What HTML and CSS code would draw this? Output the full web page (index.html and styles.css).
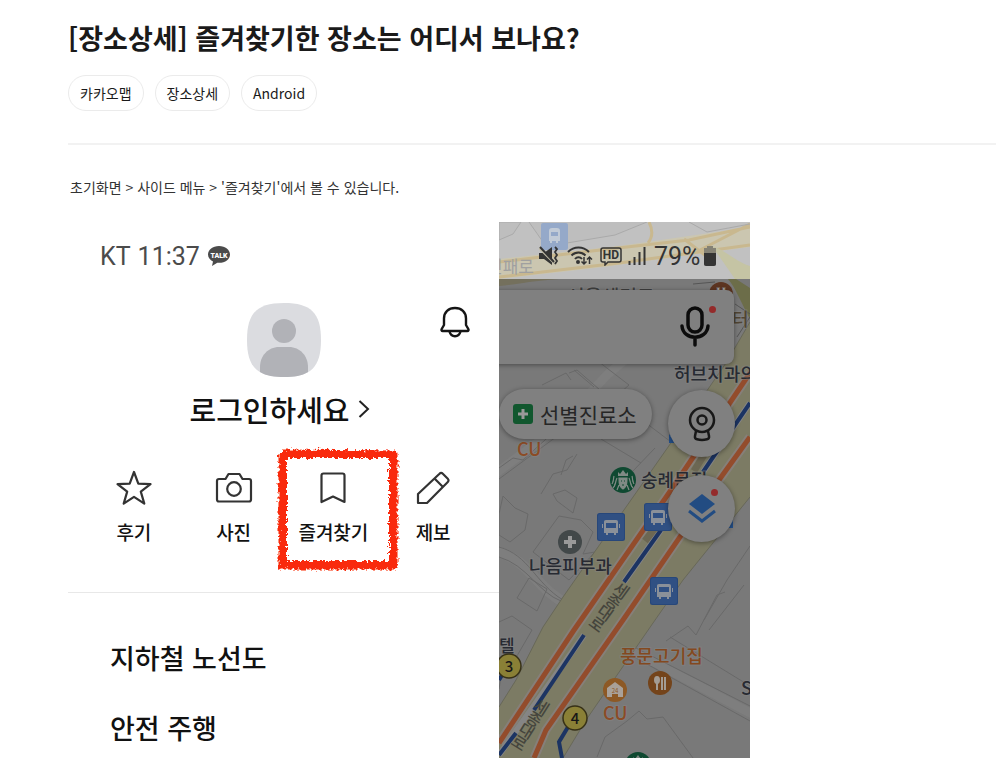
FILE: index.html
```html
<!DOCTYPE html>
<html lang="ko">

<head>
    <meta charset="UTF-8">
    <meta name="viewport" content="width=device-width, initial-scale=1.0">
    <title>[장소상세] 즐겨찾기한 장소는 어디서 보나요?</title>
    <link rel="stylesheet" href="styles.css">
</head>

<body>

    <main class="article">
        <header class="article-head">
            <h1>[장소상세] 즐겨찾기한 장소는 어디서 보나요?</h1>
            <div class="tags">
                <a href="#" class="tag">카카오맵</a>
                <a href="#" class="tag">장소상세</a>
                <a href="#" class="tag">Android</a>
            </div>
        </header>

        <p class="path">초기화면 &gt; 사이드 메뉴 &gt; '즐겨찾기'에서 볼 수 있습니다.</p>

        <div class="phone">
            <section class="drawer">
                <div class="status">
                    <span class="carrier">KT</span>
                    <span class="clock">11:37</span>
                    <svg class="talk" viewBox="0 0 24 22">
                        <path d="M12 1C5.600 1 1 4.800 1 9.500c0 3 2 5.600 5 7.100L5 21l5.300-3.300c7 .8 12.700-3 12.700-8.200C23 4.800 18.400 1 12 1z" fill="#4b4b4b"/>
                        <text x="12" y="12.500" text-anchor="middle" font-size="7" font-weight="900" fill="#fff">TALK</text>
                    </svg>
                </div>

                <div class="profile">
                    <svg class="avatar" viewBox="0 0 74 74">
                        <path d="M37 0C64 0 74 10 74 37S64 74 37 74 0 64 0 37 10 0 37 0z" fill="#dbdce0"/>
                        <circle cx="37" cy="28" r="12" fill="#b1b2b7"/>
                        <path d="M13 69V64c0-11 8-20 19-20h10c11 0 19 9 19 20v5c-6 4-14 5-24 5s-18-1-24-5z" fill="#b1b2b7"/>
                    </svg>
                    <button class="bell" aria-label="알림">
                        <svg viewBox="0 0 30 32" fill="none" stroke="#151515" stroke-width="2.400" stroke-linejoin="round">
                            <path d="M4 19V12.500C4 6 8.500 2 15 2s11 4 11 10.500V19l2.300 4c.5 1 .1 2-1 2H2.700c-1.100 0-1.500-1-1-2z"/>
                            <path d="M9.500 25.500c.8 3 2.800 4.700 5.500 4.700s4.700-1.700 5.500-4.700"/>
                        </svg>
                    </button>
                </div>

                <button class="login">
                    로그인하세요
                    <svg viewBox="0 0 12 18" fill="none" stroke="#222" stroke-width="2"><path d="M1.500 1l8.500 8-8.500 8"/></svg>
                </button>

                <nav class="quick">
                    <button>
                        <svg viewBox="0 0 38 38" fill="none" stroke="#333" stroke-width="2.200" stroke-linejoin="round">
                            <path d="M19 3l4.300 11.700 12.200.4-9.700 7.500 3.500 12L19 27.800 8.700 34.600l3.500-12L2.500 15.100l12.200-.4z"/>
                        </svg>
                        <span>후기</span>
                    </button>
                    <button>
                        <svg viewBox="0 0 38 38" fill="none" stroke="#333" stroke-width="2.200" stroke-linejoin="round">
                            <path d="M4 10h6.500l3-5h11l3 5H34c1.200 0 2 .8 2 2v18.500c0 1.200-.8 2-2 2H4c-1.200 0-2-.8-2-2V12c0-1.200.8-2 2-2z"/>
                            <circle cx="19" cy="20" r="6.800"/>
                        </svg>
                        <span>사진</span>
                    </button>
                    <button>
                        <svg viewBox="0 0 38 38" fill="none" stroke="#333" stroke-width="2.200" stroke-linejoin="round">
                            <path d="M9.500 4.500h19c1.200 0 2 .8 2 2V33L19 27.500 7.500 33V6.500c0-1.200.8-2 2-2z"/>
                        </svg>
                        <span>즐겨찾기</span>
                        <svg class="marker" viewBox="0 0 126 126" fill="none">
                            <filter id="crayon" x="-5%" y="-5%" width="110%" height="110%">
                                <feTurbulence type="fractalNoise" baseFrequency="0.35" numOctaves="3" seed="4" result="noise"/>
                                <feDisplacementMap in="SourceGraphic" in2="noise" scale="7" xChannelSelector="R" yChannelSelector="G"/>
                            </filter>
                            <g filter="url(#crayon)" stroke="#f9290d">
                                <path d="M7 7l112 1v112H7V7" stroke-width="7" stroke-linejoin="round"/>
                                <path d="M11 4v112M115 5v115M6 11h112M10 116h108" stroke-width="2"/>
                            </g>
                        </svg>
                    </button>
                    <button>
                        <svg viewBox="0 0 38 38" fill="none" stroke="#333" stroke-width="2.200" stroke-linejoin="round">
                            <path d="M4 34v-9L25.500 4.700c1-1 2.300-1 3.300 0l5 5c1 1 1 2.300 0 3.300L13 34zM20.500 9.500l8.500 8.500"/>
                        </svg>
                        <span>제보</span>
                    </button>
                </nav>

                <ul class="menu">
                    <li><a href="#">지하철 노선도</a></li>
                    <li><a href="#">안전 주행</a></li>
                </ul>
            </section>

            <section class="map">
                <svg class="tiles" viewBox="0 0 251 536">
                    <defs>
                        <g id="bus">
                            <rect width="28" height="28" rx="2.500" fill="#27477a"/>
                            <rect x="1" y="1" width="26" height="26" rx="2" fill="#305083"/>
                            <path d="M9 7h10c1.500 0 2 .8 2 2v11h-2v2h-2v-2h-6v2H9v-2H7V9c0-1.200.5-2 2-2z" fill="#8a9099"/>
                            <path d="M9 10h10v5H9z" fill="#305083"/>
                            <path d="M9 17h2v1H9zM17 17h2v1h-2zM5 11h1v4H5zM22 11h1v4h-1z" fill="#8a9099"/>
                        </g>
                    </defs>
                    <rect width="251" height="536" fill="#797979"/>

                    <!-- small roads and buildings -->
                    <g fill="none" stroke="#7e7e7e" stroke-width="9">
                        <path d="M-3 251l60-44 52-55 36-30"/>
                        <path d="M-3 329c35 10 40 38 70 52" stroke-width="11"/>
                        <path d="M130 427l125 66"/>
                    </g>
                    <g fill="none" stroke="#696969" stroke-width="1">
                        <path d="M0 246l14-10 10 2 33-30M0 257l57-42 55-46M70 151l8-3 23 20M75 148l20 17M43 163l24-12 5 7M100 140l30 23-16 14 12 16 18-13M102 217l40 24M134 249l22-23M106 170l74 56"/>
                        <path d="M0 292l4-18 12 12 13 6-3 16-15 12-11-7zM0 325c30 8 36 36 64 53M0 335c28 8 40 36 62 44M34 330l26-36 22 4 12 12-10 22 12-2-26 28zM54 272l12-4 12 8-4 15-16-12zM18 376l12-20 18 11-10 22zM78 232l-10 16-14 4-12 20M62 253l5-15 7-4"/>
                        <path d="M0 400l13-6 20 14-22 38M98 535l8-20 22-16 12-10 8 8 16-2 30 41M129 422l122 62M126 430l125 69M167 419l22-15 8 9 21-40 8-3M171 415l80 49M245 363l-35 45M205 398l23-40 23-34M234 275l10-14 7 4M3 450l-3 17"/>
                        <path d="M72 141l15-9 12 8"/>
                    </g>

                    <!-- main street -->
                    <path d="M0 485l17-27 27-53 20-30 110-157 53-77 24-41v175l-24 30-43 53-30 43-67 97-23 38H0z" fill="#7c7b64"/>
                    <path d="M0 485l17-27 27-53 20-30 110-157 53-77 24-41M64 536l23-38 67-97 30-43 67-83" fill="none" stroke="#686859"/>
                    <g fill="none">
                        <path d="M0 521l75-113 97-140 79-117M35 536l12-28 77-110 96-140 31-43" stroke="#867f79" stroke-width="9"/>
                        <path d="M0 533l85-120M125 360l37-52M204 250l47-69" stroke="#858585" stroke-width="6"/>
                        <path d="M0 521l75-113 97-140 79-117M35 536l12-28 77-110 96-140 31-43" stroke="#934c2c" stroke-width="5"/>
                        <path d="M0 533l17-22M35 488l50-75M125 360l37-52M204 250l47-69M72 500l-12 20 3 16M0 458l5-8" stroke="#1c3463" stroke-width="4"/>
                        <path d="M146 319l10-13M195 249l10-16" stroke="#6c6753" stroke-width="7"/>
                    </g>

                    <!-- strip above the search box -->
                    <path d="M0 57h251v43l-10-16-12-27z" fill="#777"/>
                    <path d="M0 57h60C30 59 15 63 0 64z" fill="#74705d"/>
                    <path d="M229 57c8 9 14 26 22 40V66l-14-9z" fill="#6c6d49"/>
                    <path d="M194 62l22-2M236 82l15 10M238 115l13-20" stroke="#555" fill="none"/>
                    <circle cx="222" cy="72" r="12" fill="#5c3421"/>
                    <text x="222" y="76" class="place" font-size="13" text-anchor="middle" fill="#aaa">H</text>
                    <text x="68" y="82" class="place" font-size="19" fill="#3e3e3e">서울센터로</text>

                    <!-- street names -->
                    <g class="street">
                        <g transform="translate(122 369) rotate(36)"><text x="0 0 0 0" y="5 19 33 47">세종대로</text></g>
                        <g transform="translate(42 486) rotate(32)"><text x="0 0 0 0" y="5 19 33 47">세종대로</text></g>
                    </g>

                    <!-- places -->
                    <use href="#bus" x="98" y="291"/>
                    <use href="#bus" x="145" y="281"/>
                    <use href="#bus" x="151" y="355"/>
                    <path d="M170 213l5-4v12h-5zM228 300l6-3v9h-7z" fill="#24508a"/>

                    <g class="place">
                        <text x="175" y="159" font-size="18" class="dark">허브치과의원</text>
                        <text x="233" y="104" font-size="18" fill="#514533">터</text>
                        <text x="18" y="234" font-size="18" fill="#8c4b25">CU</text>
                        <text x="142" y="265" font-size="18" class="dark">숭례문점</text>
                        <text x="30" y="351" font-size="18" class="dark">나음피부과</text>
                        <text x="0" y="430" font-size="17" class="dark">텔</text>
                        <text x="121" y="441" font-size="18" fill="#84491f">풍문고기집</text>
                        <text x="104" y="498" font-size="18" fill="#8c4b25">CU</text>
                        <text x="242" y="473" font-size="18" class="dark">Seoul</text>
                    </g>

                    <circle cx="71" cy="320" r="12" fill="#424849"/>
                    <path d="M71 314v12M65 320h12" stroke="#999" stroke-width="4"/>

                    <g id="coffee">
                        <circle cx="124" cy="258" r="13" fill="#0f4931"/>
                        <path d="M119 250l2 2 3-4 3 4 2-2v4h-10z" fill="#7f8a84"/>
                        <path d="M120 256c0 7 1 9 4 11 3-2 4-4 4-11zM118 256c-2 4-1 8-4 10M130 256c2 4 1 8 4 10M115 254c-1 4 0 5-2 8M133 254c1 4 0 5 2 8M118 268l2-5M130 268l-2-5" fill="#7f8a84" stroke="#7f8a84" stroke-width="1.200"/>
                        <path d="M122 259h1M125 259h1M123 263h2" stroke="#0f4931"/>
                    </g>
                    <use href="#coffee" x="15" y="285"/>

                    <g stroke="#373117" stroke-width="1.500" fill="#8a8036">
                        <circle cx="10" cy="444" r="12"/>
                        <circle cx="76" cy="496" r="12"/>
                    </g>
                    <g font-family="Noto Sans CJK KR, sans-serif" font-size="15" font-weight="500" fill="#171717" text-anchor="middle">
                        <text x="10" y="450">3</text>
                        <text x="76" y="502">4</text>
                    </g>

                    <circle cx="116" cy="468" r="12" fill="#8d5925"/>
                    <path d="M108 466l8-6 8 6v9h-5v-3h-6v3h-5z" fill="#a9a199"/>
                    <text x="116" y="471" font-size="6" text-anchor="middle" fill="#8d5925">24</text>
                    <circle cx="161" cy="461" r="12" fill="#74441b"/>
                    <ellipse cx="158" cy="458" rx="3" ry="4" fill="#a39c94"/>
                    <path d="M158 460v8M163 455v13M166 455v13" stroke="#a39c94" stroke-width="2"/>

                    <!-- bright strip behind the status icons -->
                    <g>
                        <rect width="251" height="57" fill="#c1c1c1"/>
                        <path d="M0 0h22l-8 12L0 18zM30 0l14 20 12 3 60-10 32-13" fill="#bebebe" stroke="#aaa"/>
                        <path d="M0 37l120-13 70-10 61-9v20l-60 8L105 45 0 57z" fill="#cbc6b0"/>
                        <path d="M0 40l110-13 80-9 61-13M0 55l120-14 131-18M150 0c5 10 3 16-1 21M251 2l-50 26M185 17l22 17" fill="none" stroke="#c9b88f" stroke-width="3"/>
                        <path d="M213 24c15 5 24 16 38 20v13h-15z" fill="#c5c4a4"/>
                        <path d="M190 0l18 10 43-8" fill="none" stroke="#aaa"/>
                        <rect x="42" y="1" width="27" height="27" rx="2" fill="#95a9c9"/>
                        <path d="M50 9c0-2 1-3 3-3h5c2 0 3 1 3 3v10h-2v2h-2v-2h-4v2h-2v-2h-1z" fill="#c2cbd7"/>
                        <path d="M52 10h7v4h-7z" fill="#95a9c9"/>
                        <text x="-12" y="51" class="strip-name">인패로</text>
                    </g>
                </svg>

                <div class="status map-status">
                    <svg class="icon-mute" viewBox="0 0 20 20" fill="#343434">
                        <path d="M0 7h5l8-6v18l-8-6H0z"/>
                        <path d="M0 2l17 17" stroke="#c1bca8" stroke-width="2"/>
                        <path d="M1 1l14 15" stroke="#343434" stroke-width="2"/>
                        <path d="M16 1l2 2-2 3 2 3-2 3 2 3-2 3" fill="none" stroke="#343434" stroke-width="1.800"/>
                    </svg>
                    <svg class="icon-wifi" viewBox="0 0 26 20" fill="none" stroke="#343434" stroke-width="2">
                        <path d="M1 6c6-6 15-6 21 0M4.500 9.500c4-4 10-4 14 0M8 13c2-2.500 5-2.500 7 0"/>
                        <circle cx="11" cy="16" r="1"/>
                        <path d="M17 11v7M14.500 15.500L17 18l2.500-2.500M22.500 18v-7M20 13.500l2.500-2.500 2.500 2.500" stroke-width="1.500"/>
                    </svg>
                    <svg class="icon-hd" viewBox="0 0 22 20" fill="none" stroke="#343434" stroke-width="1.500">
                        <path d="M3 2h16c1 0 2 1 2 2v10c0 1-1 2-2 2H8l-3 3v-3H3c-1 0-2-1-2-2V4c0-1 1-2 2-2z"/>
                        <text x="11" y="13" font-size="12" font-weight="700" text-anchor="middle" fill="#343434" stroke="none">HD</text>
                    </svg>
                    <svg class="icon-signal" viewBox="0 0 18 20" stroke="#343434" stroke-width="2">
                        <path d="M1.500 19v-4M6.500 19v-8M11.500 19V6M16.500 19V1"/>
                    </svg>
                    <span>79%</span>
                    <svg class="icon-battery" viewBox="0 0 14 20">
                        <path d="M4 0h6v2h3v6H1V2h3z" fill="#858275"/>
                        <path d="M1 7h12v11c0 1-.5 2-2 2H3c-1.500 0-2-1-2-2z" fill="#343434"/>
                    </svg>
                </div>

                <div class="searchbar">
                    <button class="mic" aria-label="음성 검색">
                        <svg viewBox="0 0 30 42" fill="none" stroke="#0c0c0c" stroke-width="3.500" stroke-linecap="round">
                            <rect x="8" y="3" width="14" height="24" rx="7"/>
                            <path d="M2 21c1 15 25 15 26 0M15 33v7"/>
                        </svg>
                    </button>
                </div>

                <button class="chip">
                    <svg viewBox="0 0 20 20"><rect width="20" height="20" rx="3" fill="#11572e"/><path d="M10 5v10M5 10h10" stroke="#999" stroke-width="3"/></svg>
                    선별진료소
                </button>

                <button class="round roadview" aria-label="로드뷰">
                    <svg viewBox="0 0 28 36" fill="none" stroke="#181818" stroke-width="2.500" stroke-linejoin="round">
                        <circle cx="14" cy="14" r="12"/><circle cx="14" cy="14" r="4.500"/>
                        <path d="M8 25l-1 5c-.4 2 .5 3 2 3.300 3 .8 7 .8 10 0 1.500-.3 2.400-1.300 2-3.300l-1-5"/>
                    </svg>
                </button>
                <button class="round layers" aria-label="지도 설정">
                    <svg viewBox="0 0 28 30"><path d="M14 0l13 10-13 10L1 10z" fill="#224c82"/><path d="M1 17l13 10 13-10" fill="none" stroke="#224c82" stroke-width="3"/></svg>
                </button>
            </section>
        </div>
    </main>

</body>

</html>
```

FILE: styles.css
```css
* {
    box-sizing: border-box;
}

body {
    margin: 0;
    font-family: "Noto Sans CJK KR", sans-serif;
    color: #1a1a1a;
    background-color: #fff;
}

button {
    padding: 0;
    border: none;
    background: none;
    font-family: inherit;
    color: inherit;
    cursor: pointer;
}

a {
    color: inherit;
    text-decoration: none;
}

svg {
    display: block;
    flex-shrink: 0;
}

.article {
    padding: 18px 0 0 68px;
}

.article-head {
    padding-bottom: 32px;
    border-bottom: 2px solid #f2f2f2;
}

h1 {
    margin: 0;
    font-size: 27px;
    line-height: 40px;
    font-weight: 700;
}

.tags {
    display: flex;
    gap: 11px;
    margin-top: 17px;
}

.tag {
    height: 36px;
    padding: 0 11px;
    border: 1px solid #ebebeb;
    border-radius: 18px;
    font-size: 14px;
    line-height: 34px;
}

.path {
    margin: 32px 0 24px;
    padding-left: 2px;
    font-size: 14px;
    line-height: 21px;
    color: #333;
}

.phone {
    display: grid;
    grid-template-columns: 431fr 251fr;
    max-width: 682px;
}

/* left side: open drawer */

.drawer {
    color: #111;
}

.status {
    display: flex;
    align-items: center;
    height: 57px;
    padding: 11px 0 0 32px;
    font-family: Roboto, sans-serif;
    font-size: 25px;
    color: #4b4b4b;
}

.clock {
    margin: 0 7px;
}

.talk {
    width: 24px;
    height: 22px;
}

.profile {
    display: grid;
    grid-template-columns: 1fr auto 1fr;
    padding: 24px 29px 0;
}

.avatar {
    grid-column: 2;
    width: 74px;
    height: 74px;
}

.bell {
    justify-self: end;
    align-self: start;
    margin-top: 3px;
}

.bell svg {
    width: 30px;
    height: 32px;
}

.login {
    display: flex;
    align-items: center;
    gap: 8px;
    margin: 12px auto 0;
    padding-right: 8px;
    font-size: 29px;
    line-height: 40px;
    font-weight: 500;
}

.login svg {
    width: 12px;
    height: 18px;
}

.quick {
    display: grid;
    grid-template-columns: repeat(4, 1fr);
    padding: 40px 16px 46px;
    border-bottom: 1px solid #e8e8e8;
}

.quick button {
    position: relative;
    display: flex;
    flex-direction: column;
    align-items: center;
    gap: 11px;
    font-size: 19px;
    line-height: 28px;
    font-weight: 500;
}

.quick svg {
    width: 38px;
    height: 38px;
}

.quick .marker {
    position: absolute;
    top: -23px;
    left: -9px;
    width: 126px;
    height: 126px;
}

.menu {
    margin: 0;
    padding: 30px 42px 0;
    list-style: none;
    font-size: 27px;
    line-height: 70px;
    font-weight: 500;
}

/* right side: dimmed map */

.map {
    position: relative;
    overflow: hidden;
    background-color: #797979;
}

.tiles {
    position: absolute;
    top: 0;
    left: 0;
    width: 100%;
    height: auto;
}

.tiles .place {
    font-family: "Noto Sans CJK KR", sans-serif;
    font-weight: 500;
    stroke: #858585;
    stroke-width: 2px;
    paint-order: stroke;
    stroke-opacity: 0.5;
}

.tiles .dark {
    fill: #272a32;
}

.strip-name {
    font-family: "Noto Sans CJK KR", sans-serif;
    font-size: 17px;
    fill: #a0a0a0;
}

.street {
    font-family: "Noto Sans CJK KR", sans-serif;
    font-size: 16px;
    font-weight: 500;
    text-anchor: middle;
    fill: #45453d;
}

.map-status {
    position: relative;
    padding-left: 40px;
    color: #343434;
}

.icon-mute {
    width: 20px;
    height: 20px;
}

.icon-wifi {
    width: 26px;
    height: 20px;
    margin-left: 8px;
}

.icon-hd {
    width: 22px;
    height: 20px;
    margin-left: 7px;
}

.icon-signal {
    width: 18px;
    height: 20px;
    margin: 0 8px 0 6px;
}

.icon-battery {
    width: 14px;
    height: 20px;
    margin-left: 3px;
}

.searchbar,
.chip,
.round {
    position: absolute;
    background-color: #808080;
    box-shadow: 0 1px 5px rgba(0, 0, 0, 0.4);
}

.searchbar {
    top: 68px;
    left: -10px;
    right: 16px;
    height: 74px;
    border-radius: 8px;
}

.mic {
    position: absolute;
    top: 15px;
    right: 24px;
}

.mic svg {
    width: 30px;
    height: 42px;
}

.mic::after,
.layers::after {
    content: "";
    position: absolute;
    top: 1px;
    right: -6px;
    width: 7px;
    height: 7px;
    border-radius: 50%;
    background-color: #942b2b;
}

.chip {
    top: 167px;
    left: 0;
    display: flex;
    align-items: center;
    gap: 7px;
    height: 50px;
    padding: 0 15px 0 14px;
    border-radius: 25px;
    font-size: 21px;
    color: #262626;
}

.chip svg {
    width: 20px;
    height: 20px;
}

.round {
    right: 15px;
    display: flex;
    align-items: center;
    justify-content: center;
    width: 67px;
    height: 67px;
    border-radius: 50%;
}

.roadview {
    top: 168px;
}

.roadview svg {
    width: 28px;
    height: 36px;
}

.layers {
    top: 253px;
}

.layers svg {
    width: 28px;
    height: 30px;
}

.layers::after {
    top: 14px;
    right: 17px;
}
```
